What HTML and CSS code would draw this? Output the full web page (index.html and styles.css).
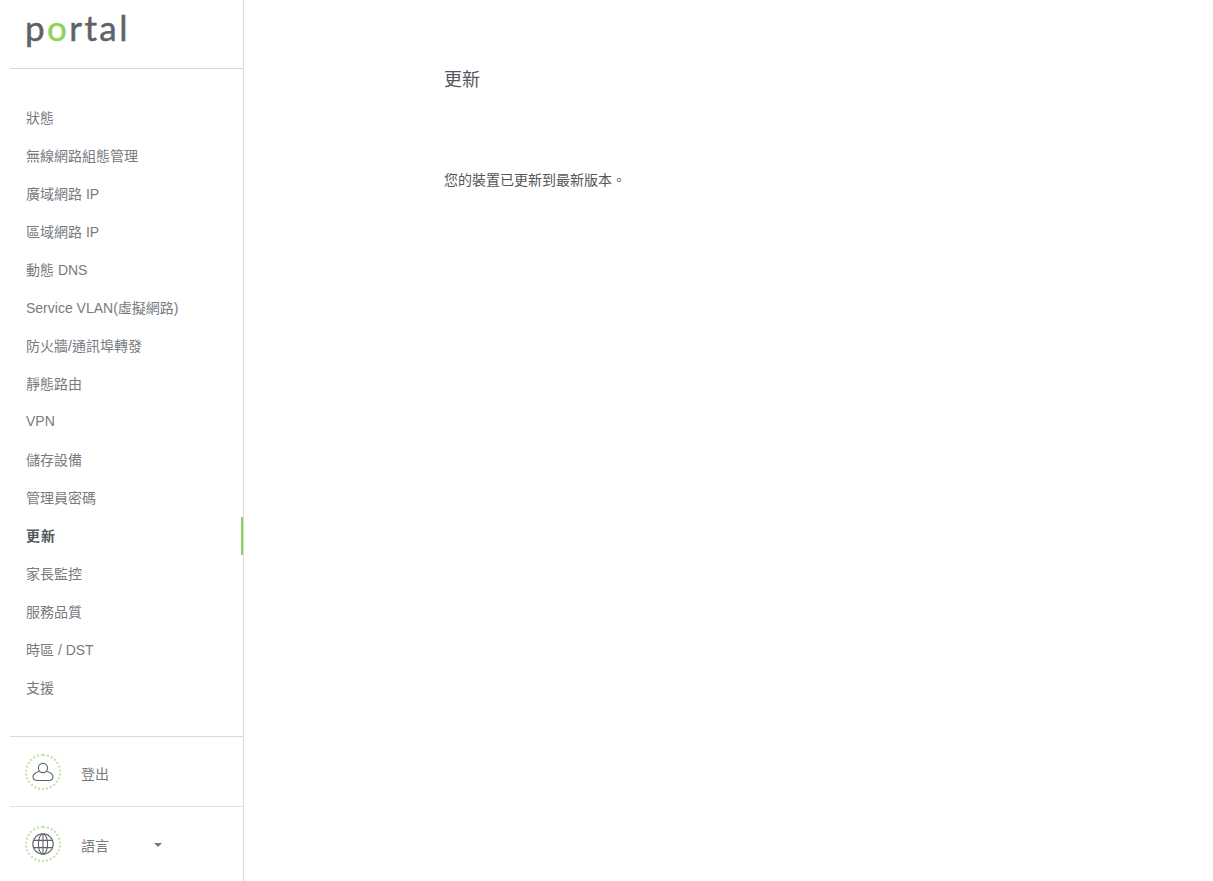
FILE: index.html
```html
<!DOCTYPE html>
<html lang="zh-Hant">
<head>
  <meta charset="UTF-8">
  <title>更新</title>
  <link rel="stylesheet" href="styles.css">
</head>
<body>
  <div class="page">
    <aside class="sidebar">
      <div class="logo"><span>p</span><span class="logo-o">o</span><span>rtal</span></div>
      <nav class="nav">
        <a class="nav-item">狀態</a>
        <a class="nav-item">無線網路組態管理</a>
        <a class="nav-item">廣域網路 IP</a>
        <a class="nav-item">區域網路 IP</a>
        <a class="nav-item">動態 DNS</a>
        <a class="nav-item">Service VLAN(虛擬網路)</a>
        <a class="nav-item">防火牆/通訊埠轉發</a>
        <a class="nav-item">靜態路由</a>
        <a class="nav-item">VPN</a>
        <a class="nav-item">儲存設備</a>
        <a class="nav-item">管理員密碼</a>
        <a class="nav-item active">更新</a>
        <a class="nav-item">家長監控</a>
        <a class="nav-item">服務品質</a>
        <a class="nav-item">時區 / DST</a>
        <a class="nav-item">支援</a>
      </nav>
      <div class="side-row logout">
        <span class="ring">
          <svg width="22" height="20" viewBox="0 0 22 20" fill="none" stroke="#5f6368" stroke-width="1.1">
            <circle cx="11" cy="6" r="4.6"/>
            <path d="M7.4 9.2C4 10.2 1 11.8 1 14.8C1 17.4 3 18.5 5.5 18.5H16.5C19 18.5 21 17.4 21 14.8C21 11.8 18 10.2 14.6 9.2"/>
          </svg>
        </span>
        <span class="side-label">登出</span>
      </div>
      <div class="side-row lang">
        <span class="ring">
          <svg width="22" height="22" viewBox="0 0 22 22" fill="none" stroke="#5f6368" stroke-width="1.1">
            <circle cx="11" cy="11" r="10.2"/>
            <ellipse cx="11" cy="11" rx="4.6" ry="10.2"/>
            <path d="M1.8 7.4H20.2M1.8 14.6H20.2M11 .8V21.2"/>
          </svg>
        </span>
        <span class="side-label">語言</span>
        <span class="caret"></span>
      </div>
    </aside>
    <main class="content">
      <h1 class="title">更新</h1>
      <p class="message">您的裝置已更新到最新版本。</p>
    </main>
  </div>
</body>
</html>
```

FILE: styles.css
```css
* { box-sizing: border-box; }
html, body {
  margin: 0;
  padding: 0;
  height: 100%;
}
body {
  background: #fff;
  color: #5f6368;
  font-family: "Liberation Sans", "Noto Sans CJK TC", Arial, sans-serif;
  font-size: 14px;
  overflow: hidden;
}
.page {
  display: flex;
  height: 881px;
}
.sidebar {
  width: 244px;
  flex-shrink: 0;
  padding-left: 10px;
  border-right: 1px solid #dcdcdc;
  display: flex;
  flex-direction: column;
}
.logo {
  height: 69px;
  padding: 0 0 0 15px;
  border-bottom: 1px solid #d9d9d9;
  font-family: "Lato", sans-serif;
  font-size: 35px;
  line-height: 54px;
  letter-spacing: 2.4px;
  color: #5f6368;
  -webkit-text-stroke: 0.5px currentColor;
}
.logo-o {
  color: #8cd35a;
}
.nav {
  display: flex;
  flex-direction: column;
  padding-top: 30px;
  height: 668px;
  border-bottom: 1px solid #d9d9d9;
}
.nav-item {
  display: flex;
  align-items: center;
  height: 38px;
  flex-shrink: 0;
  padding: 0 0 2px 16px;
  color: #777b7f;
}
.nav-item.active {
  color: #54585c;
  font-weight: bold;
  letter-spacing: 1px;
  border-right: 2px solid #8cd35a;
}
.side-row {
  display: flex;
  align-items: center;
  padding-left: 15px;
}
.logout {
  height: 70px;
  border-bottom: 1px solid #e2e2e2;
}
.lang {
  height: 74px;
}
.ring {
  width: 36px;
  height: 36px;
  border-radius: 50%;
  border: 2px dotted #bde4a6;
  display: flex;
  align-items: center;
  justify-content: center;
  flex-shrink: 0;
}
.side-label {
  margin: 3px 0 0 20px;
  color: #777b7f;
}
.lang .side-label {
  margin-top: 1px;
}
.caret {
  margin: 2px 0 0 45px;
  width: 0;
  height: 0;
  border-left: 4px solid transparent;
  border-right: 4px solid transparent;
  border-top: 4px solid #777;
}
.content {
  flex: 1;
  padding: 68px 0 0 200px;
}
.title {
  margin: 0;
  font-size: 18px;
  font-weight: normal;
  line-height: 24px;
  color: #54585c;
}
.message {
  margin: 77px 0 0;
  line-height: 22px;
  color: #555;
}
```
